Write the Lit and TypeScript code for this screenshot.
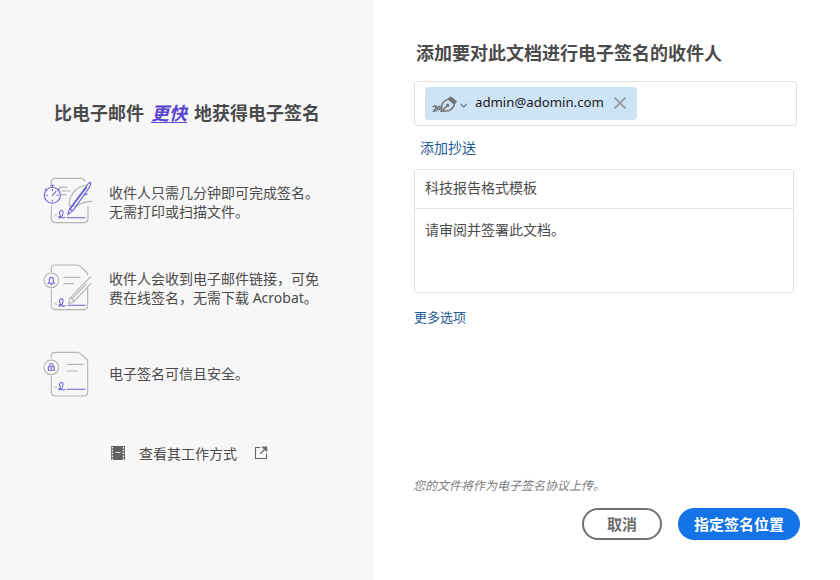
import { LitElement, html, css, svg } from "lit";
import { customElement } from "lit/decorators.js";

const signature = (y: number) => svg`
  <g transform="translate(56 ${y})">
    <path d="M0 12l6 6m0-6l-6 6" stroke="#b0b0b0" stroke-width="2"/>
    <path class="v" d="M17 14Q11 5 18 1Q26-1 25 8Q24 18 17 22Q12 24 13 19Q16 15 22 21Q26 25 32 21"/>
  </g>
`;

const fastIcon = svg`
  <path class="g" d="M46 42V37q0-12 12-12H135q8 0 11 8M46 110V144q0 14 14 14H142q14 0 14-14V110M70 52h22M76 63h26M76 74h15"/>
  <path class="g" d="M100 108C98 86 112 50 152 45M122 108q20-14 45-14M104 106q10 6 20-2"/>
  <circle class="v" cx="49" cy="76" r="24"/>
  <path class="v" d="M44 46h10M49 46v6M28 57l4 4M70 57l-4 4M49 58v4M49 90v4M31 76h4M63 76h4M49 76l11-12"/>
  <path class="v" d="M95 134L101 116L156 42Q163 34 164 39Q165 44 160 52L111 122ZM103 117L152 52M101 116l9 7M144 76l10-4"/>
  ${signature(121)}
  <path class="v" d="M94 143H147"/>
`;

const mailIcon = svg`
  <path class="g" d="M46 47V38q0-11 12-11H124q5 0 9 4L151 48q4 4 4 9M46 101V148q0 13 12 13H143q12 0 12-13V96M84 64H132M84 83H112"/>
  <circle class="g" cx="46" cy="73" r="22"/>
  <path class="v" d="M36 82q4-2 4-7V71q0-7 6-7t6 7V75q0 5 4 7ZM44 86h4"/>
  <path class="g" d="M98 143L101 127L164 62M98 143L114 137L165 82M101 127q3-3 6 2q5 1 7 8M109 127L150 85"/>
  ${signature(128)}
  <path class="v" d="M96 148H148"/>
`;

const secureIcon = svg`
  <path class="g" d="M46 40V36q0-11 12-11H124q5 0 9 4L151 45q4 4 4 9V143q0 13-12 13H58q-12 0-12-13V98M94 61H142M94 81H124"/>
  <circle class="g" cx="46" cy="70" r="22"/>
  <path class="v" d="M37 68H55V79H37ZM41 68V64q0-5 5-5t5 5V68M46 72v3"/>
  ${signature(115)}
  <path class="v" d="M94 136H147"/>
`;

@customElement("app-root")
export class AppRoot extends LitElement {
  static styles = css`
    :host {
      display: flex;
      width: 840px;
      height: 580px;
      overflow: hidden;
      background: #fff;
      color: #4b4b4b;
      font: 14px/19px "Noto Sans", "Noto Sans CJK SC", sans-serif;
    }
    * { box-sizing: border-box; }
    svg { display: block; flex: none; fill: none; stroke-linecap: round; stroke-linejoin: round; }
    h1, h2 { margin: 0; font-size: 18px; line-height: 26px; font-weight: 700; white-space: nowrap; }
    .intro { width: 373px; flex: none; background: #f7f7f7; padding: 100px 0 0 36px; }
    .intro h2 { padding-left: 18px; margin-bottom: 44px; display: flex; }
    .intro em { color: #5a45d0; text-decoration: underline; text-underline-offset: 2px; text-decoration-thickness: 1px; margin: 0 7px; }
    .row { display: flex; height: 60px; gap: 9px; align-items: center; margin-bottom: 26px; white-space: nowrap; }
    .row.second { margin-bottom: 28px; }
    .row p { margin: 0; padding-top: 3px; }
    .row.third p { padding: 0 0 2px; }
    .row.third { margin-bottom: 0; }
    .g { stroke: #b4b4b4; stroke-width: 3.4; }
    .v { stroke: #6a62d2; stroke-width: 3.2; }
    .watch { display: flex; align-items: center; height: 20px; margin-top: 39px; padding-left: 74px; }
    .watch span { margin: 0 17px 0 14px; }
    .form { flex: 1; padding: 40px 40px 0 41px; display: flex; flex-direction: column; align-items: flex-start; }
    .form h1 { padding-left: 2px; }
    .recipients { width: 383px; height: 45px; margin-top: 15px; border: 1px solid #e0e0e0; border-radius: 3px; padding: 5px 10px; }
    .chip { width: 212px; height: 33px; border-radius: 4px; background: #cde3f6; display: flex; align-items: center; padding-left: 7px; color: #1b1b1b; font-family: "Noto Sans", sans-serif; }
    .chip .address { width: 128px; margin: 0 11px 2px 7px; font-size: 13.2px; white-space: nowrap; }
    .chip .remove { margin-bottom: 1px; }
    a { color: #1d5a93; }
    .cc { margin: 12px 0 12px 6px; }
    .message { width: 380px; height: 124px; border: 1px solid #e0e0e0; border-radius: 3px; }
    .subject { height: 39px; padding: 8px 10px; border-bottom: 1px solid #e0e0e0; }
    .body { padding: 11px 10px; }
    .more { font-size: 13px; margin-top: 15px; }
    .note { font-size: 12px; font-style: italic; color: #7d7d7d; margin: 149px 0 13px -1px; white-space: nowrap; }
    .actions { display: flex; gap: 16px; margin-left: 168px; }
    button { height: 32px; border-radius: 16px; padding: 0; font: 700 15px/20px "Noto Sans", "Noto Sans CJK SC", sans-serif; }
    .cancel { width: 80px; border: 2px solid #707070; background: #fff; color: #6e6e6e; }
    .primary { width: 122px; border: 0; background: #1473e6; color: #fff; }
  `;

  private row(name: string, icon: unknown, text: unknown) {
    return html`<div class="row ${name}">
      <svg width="64" height="60" viewBox="0 0 192 180">${icon}</svg>
      <p>${text}</p>
    </div>`;
  }

  render() {
    return html`
      <section class="intro">
        <h2><span>比电子邮件</span><em>更快</em><span>地获得电子签名</span></h2>
        ${this.row("first", fastIcon, html`收件人只需几分钟即可完成签名。<br />无需打印或扫描文件。`)}
        ${this.row("second", mailIcon, html`收件人会收到电子邮件链接，可免<br />费在线签名，无需下载 Acrobat。`)}
        ${this.row("third", secureIcon, "电子签名可信且安全。")}
        <div class="watch">
          <svg width="15" height="15" viewBox="0 0 15 15">
            <path fill="#626262" d="M1 0h14v14H1z" />
            <path stroke="#f7f7f7" stroke-linecap="butt" stroke-width="1.4" stroke-dasharray="1.5 1.3" d="M2.4 1v13M13.4 1v13" />
            <path stroke="#dedede" stroke-linecap="butt" d="M5.5 6.5h5" />
          </svg>
          <span>查看其工作方式</span>
          <svg width="14" height="14" viewBox="0 0 14 14" stroke="#666" stroke-width="1.1">
            <path d="M6 1.5H1.5v11h11V8M6.5 7.5L11 3" />
            <path d="M8.5 1h4.2v4.2z" fill="#666" />
          </svg>
        </div>
      </section>
      <section class="form">
        <h1>添加要对此文档进行电子签名的收件人</h1>
        <div class="recipients">
          <div class="chip">
            <svg width="36" height="22" viewBox="0 0 108 66" stroke="#747474" stroke-width="4.5">
              <path d="M4 41q7-5 9 0q0 5-9 14q6-3 9-1M24 40q-9 1-8 9q4 4 9-5" />
              <path d="M27 55L31 31Q38 21 50 18L67 33Q64 47 51 53ZM28 55L45 39" />
              <circle cx="47" cy="37" r="3" />
              <path d="M50 16L57 13L72 26L67 32Z" fill="#747474" />
              <path d="M87 34l8 8l8-8" stroke="#858b91" stroke-width="5" />
            </svg>
            <span class="address">admin@adomin.com</span>
            <svg class="remove" width="12" height="12" viewBox="0 0 12 12" stroke="#96a0a9" stroke-width="1.8"><path d="M1 1l10 10M11 1L1 11" /></svg>
          </div>
        </div>
        <a class="cc">添加抄送</a>
        <div class="message">
          <div class="subject">科技报告格式模板</div>
          <div class="body">请审阅并签署此文档。</div>
        </div>
        <a class="more">更多选项</a>
        <div class="note">您的文件将作为电子签名协议上传。</div>
        <div class="actions">
          <button class="cancel">取消</button>
          <button class="primary">指定签名位置</button>
        </div>
      </section>
    `;
  }
}
